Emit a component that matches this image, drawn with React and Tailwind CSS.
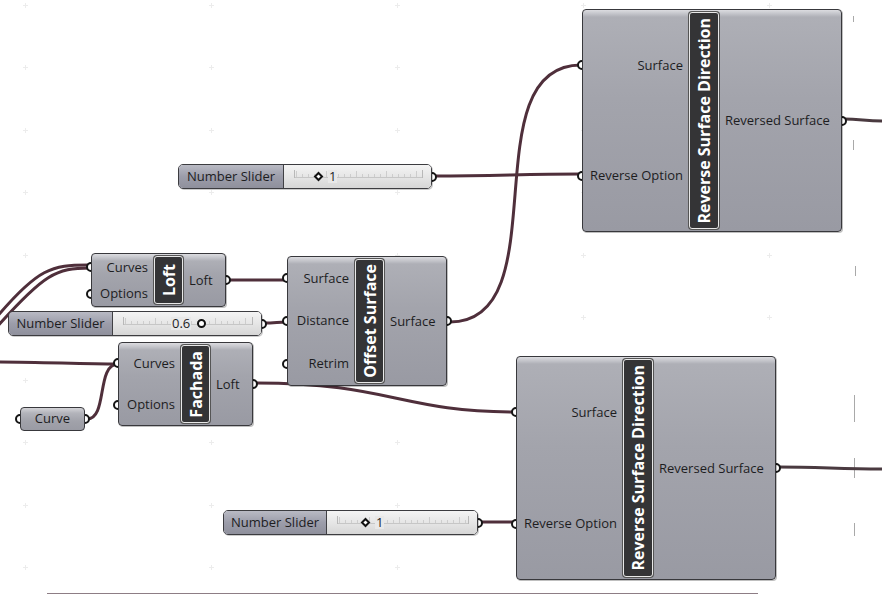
import React from 'react';

const WIRE = '#4f2f3b';

// canvas grid marks (faint crosses)
const gridXs = [25, 211, 397, 583, 769];
const gridYs = [5, 67, 130, 192, 255, 317, 380, 442, 505, 567];

const spread = (n, h) => Array.from({ length: n }, (_, i) => (h * (2 * i + 1)) / (2 * n));

function Port({ side, top }) {
  return (
    <div
      className={`absolute h-[10px] w-[10px] rounded-full border-2 border-[#151515] bg-white ${side === 'l' ? '-left-[5px]' : '-right-[5px]'}`}
      style={{ top: top - 5 }}
    />
  );
}

function Node({ pos, h, leftW, barW, title, ins, outs }) {
  return (
    <div className={`absolute ${pos}`}>
      {spread(ins.length, h).map((t, i) => (
        <Port key={'i' + i} side="l" top={t} />
      ))}
      {spread(outs.length, h).map((t, i) => (
        <Port key={'o' + i} side="r" top={t} />
      ))}
      <div className="relative flex h-full rounded-[4px] border border-[#38383c] bg-[linear-gradient(to_bottom,#dcdce0_0px,#c2c3c9_4px,#aeafb6_7px,#a3a4ac_40%,#999aa3_100%)] shadow-[1px_1px_0_rgba(0,0,0,0.25)]">
        <div className={`flex flex-col items-end justify-around pr-[6px] text-[13px] text-[#1d1d1f] ${leftW}`}>
          {ins.map((l) => (
            <span key={l} className="whitespace-nowrap leading-none">{l}</span>
          ))}
        </div>
        <div className={`my-[2px] flex items-center justify-center rounded-[3px] border border-[#e8e8e8] bg-[#343436] shadow-[0_0_0_1px_#555] ${barW}`}>
          <span className="rotate-180 whitespace-nowrap text-[16px] font-bold leading-none text-white [writing-mode:vertical-rl]">
            {title}
          </span>
        </div>
        <div className="flex flex-1 flex-col items-start justify-around pl-[6px] text-[13px] text-[#1d1d1f]">
          {outs.map((l) => (
            <span key={l} className="whitespace-nowrap leading-none">{l}</span>
          ))}
        </div>
      </div>
    </div>
  );
}

function Track({ w }) {
  const ticks = [];
  for (let x = 12; x <= w - 12; x += 6) ticks.push(x);
  return (
    <svg className="absolute inset-0" width={w} height="24">
      <line x1="10" y1="12.5" x2={w - 10} y2="12.5" stroke="#c6c6c6" strokeWidth="1" />
      {ticks.map((x, i) => (
        <line key={x} x1={x + 0.5} y1={i % 5 === 0 ? 6 : 9} x2={x + 0.5} y2="12" stroke="#cdcdcd" strokeWidth="1" />
      ))}
      <line x1="10.5" y1="5" x2="10.5" y2="13" stroke="#b8b8b8" />
      <line x1={w - 9.5} y1="5" x2={w - 9.5} y2="13" stroke="#b8b8b8" />
    </svg>
  );
}

function Slider({ pos, labelW, trackW, marker, value, markerLeft }) {
  return (
    <div className={`absolute h-[25px] ${pos}`}>
      <Port side="r" top={12.5} />
      <div className="relative flex h-full overflow-hidden rounded-[5px] border border-[#3c3c40] shadow-[1px_1px_0_rgba(0,0,0,0.2)]">
        <div className={`flex items-center justify-center border-r border-[#404044] bg-[linear-gradient(to_bottom,#b9bac4,#9c9daa_50%,#8f909c)] text-[13px] text-[#1d1d1f] ${labelW}`}>
          Number Slider
        </div>
        <div className="relative flex-1 bg-[linear-gradient(to_bottom,#f4f4f4,#e6e6e6_50%,#d6d6d6)]">
          <Track w={trackW} />
          <div className={`absolute top-0 flex h-full items-center gap-[6px] text-[13px] text-[#1d1d1f] ${markerLeft}`}>
            {marker === 'diamond' ? (
              <>
                <span className="h-[7px] w-[7px] rotate-45 border-2 border-[#111] bg-white" />
                <span className="bg-[#e8e8e8] px-[1px] leading-none">{value}</span>
              </>
            ) : (
              <>
                <span className="bg-[#e8e8e8] px-[1px] leading-none">{value}</span>
                <span className="h-[9px] w-[9px] rounded-full border-2 border-[#111] bg-white" />
              </>
            )}
          </div>
        </div>
      </div>
    </div>
  );
}

export default function App() {
  return (
    <div className="relative h-[602px] w-[882px] overflow-hidden bg-white font-['Open_Sans','Noto_Sans',sans-serif]">
      {/* wires + canvas marks */}
      <svg className="absolute inset-0" width="882" height="602">
        {gridXs.map((x) =>
          gridYs.map((y) => (
            <g key={x + '-' + y} stroke="#ececec" strokeWidth="1">
              <line x1={x - 2} y1={y + 0.5} x2={x + 3} y2={y + 0.5} />
              <line x1={x + 0.5} y1={y - 2} x2={x + 0.5} y2={y + 3} />
            </g>
          ))
        )}
        <line x1="47" y1="593.5" x2="758" y2="593.5" stroke="#8d7d85" strokeWidth="1.2" />
        <g stroke="#a9a9a9" strokeWidth="1">
          <line x1="853.5" y1="16" x2="853.5" y2="22" />
          <line x1="853.5" y1="140" x2="853.5" y2="150" />
          <line x1="855.5" y1="266" x2="855.5" y2="276" />
          <line x1="854.5" y1="395" x2="854.5" y2="422" />
          <line x1="854.5" y1="458" x2="854.5" y2="478" />
          <line x1="854.5" y1="523" x2="854.5" y2="536" />
        </g>
        <g fill="none" stroke={WIRE} strokeWidth="3" strokeLinecap="round">
          <path d="M 450 322 C 560 322, 470 65, 581 65" />
          <path d="M 433 176 C 500 176, 520 174, 581 174" />
          <path d="M 228 280 C 255 280, 260 280, 287 280" />
          <path d="M 264 323 C 275 323, 278 322, 287 322" />
          <path d="M 256 383 C 390 383, 400 412, 516 412" />
          <path d="M 480 522 L 516 522" />
          <path d="M -5 362 C 40 362, 80 364, 118 364" />
          <path d="M 87 419 C 108 419, 96 364, 118 364" />
          <path d="M -4 318 C 38 268, 52 265, 88 265" />
          <path d="M -4 328 C 44 274, 56 268, 90 268" />
        </g>
        <g fill="none" strokeWidth="3">
          <path d="M 844 119 C 860 119, 866 121, 884 121" stroke="#4a3a40" />
          <path d="M 778 467 C 820 467, 840 469, 884 469" stroke="#4a3a40" />
        </g>
      </svg>

      <Node
        pos="left-[582px] top-[9px] w-[260px] h-[223px]"
        h={223}
        leftW="w-[106px]"
        barW="w-[30px]"
        title="Reverse Surface Direction"
        ins={['Surface', 'Reverse Option']}
        outs={['Reversed Surface']}
      />
      <Node
        pos="left-[516px] top-[356px] w-[260px] h-[224px]"
        h={224}
        leftW="w-[106px]"
        barW="w-[30px]"
        title="Reverse Surface Direction"
        ins={['Surface', 'Reverse Option']}
        outs={['Reversed Surface']}
      />
      <Node
        pos="left-[287px] top-[256px] w-[160px] h-[130px]"
        h={130}
        leftW="w-[67px]"
        barW="w-[29px]"
        title="Offset Surface"
        ins={['Surface', 'Distance', 'Retrim']}
        outs={['Surface']}
      />
      <Node
        pos="left-[91px] top-[253px] w-[135px] h-[54px]"
        h={54}
        leftW="w-[62px]"
        barW="w-[29px]"
        title="Loft"
        ins={['Curves', 'Options']}
        outs={['Loft']}
      />
      <Node
        pos="left-[118px] top-[342px] w-[135px] h-[84px]"
        h={84}
        leftW="w-[62px]"
        barW="w-[29px]"
        title="Fachada"
        ins={['Curves', 'Options']}
        outs={['Loft']}
      />

      <Slider pos="left-[178px] top-[164px] w-[254px]" labelW="w-[105px]" trackW={148} marker="diamond" value="1" markerLeft="left-[31px]" />
      <Slider pos="left-[8px] top-[311px] w-[254px]" labelW="w-[104px]" trackW={149} marker="circle" value="0.6" markerLeft="left-[58px]" />
      <Slider pos="left-[223px] top-[510px] w-[255px]" labelW="w-[103px]" trackW={151} marker="diamond" value="1" markerLeft="left-[35px]" />

      {/* Curve param */}
      <div className="absolute left-[20px] top-[407px] h-[24px] w-[65px]">
        <Port side="l" top={12} />
        <Port side="r" top={12} />
        <div className="relative flex h-full items-center justify-center rounded-[4px] border border-[#38383c] bg-[linear-gradient(to_bottom,#d4d4d8_0px,#b3b4bb_5px,#a1a2aa_60%,#9a9ba4)] text-[13px] text-[#1d1d1f]">
          Curve
        </div>
      </div>
    </div>
  );
}
